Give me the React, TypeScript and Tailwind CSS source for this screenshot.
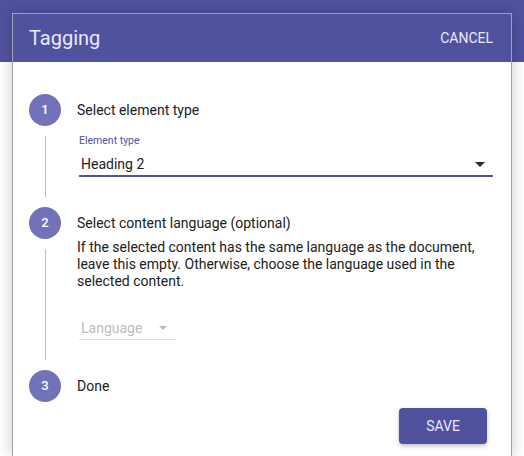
import React from "react";

function Step({
  n,
  label,
  last,
  children,
}: {
  n: number;
  label: string;
  last?: boolean;
  children?: React.ReactNode;
}) {
  return (
    <div className="flex flex-row gap-4">
      <div className="w-8 flex flex-col items-center shrink-0">
        <div className="h-8 w-8 rounded-full bg-[#7172b9] text-white text-[13px] font-medium flex items-center justify-center">
          {n}
        </div>
        {!last && <div className="flex-1 w-px bg-[#bdbdbd] my-[10px]" />}
      </div>
      <div className={"flex-1 min-w-0 " + (last ? "" : "pb-[30px]")}>
        <div className="h-8 flex items-center text-[14px] text-[#212121]">{label}</div>
        {children}
      </div>
    </div>
  );
}

export default function App() {
  return (
    <div className="w-[524px] h-[456px] overflow-hidden bg-[linear-gradient(to_bottom,#5052a0_62px,#ffffff_62px)] pt-[13px] pl-[12px] font-['Roboto',sans-serif]">
      <div className="w-[500px] h-[443px] border border-b-0 border-[#a2a2a8] bg-white shadow-[0_0_14px_rgba(0,0,0,0.22)] flex flex-col">
        <div className="h-[48px] shrink-0 bg-[#5052a0] flex items-center justify-between pl-4 pr-[18px]">
          <span className="text-[20px] text-[#e9e9f6]">Tagging</span>
          <span className="text-[14px] text-[#e9e9f6]">CANCEL</span>
        </div>
        <div className="pt-[32px] pl-4 pr-[18px]">
          <Step n={1} label="Select element type">
            <div className="ml-[2px] mt-[9px]">
              <div className="text-[10.5px] leading-[12px] text-[#5052a0]">Element type</div>
              <div className="mt-[7px] pb-[1px] border-b-2 border-[#5052a0] flex items-center justify-between">
                <span className="pl-[2px] text-[14px] leading-[20px] text-[#212121]">Heading 2</span>
                <svg width="10" height="5" viewBox="0 0 10 5" className="mr-[8px]">
                  <polygon points="0,0 10,0 5,5" fill="#2a2a2a" />
                </svg>
              </div>
            </div>
          </Step>
          <Step n={2} label="Select content language (optional)">
            <p className="text-[14px] leading-[17px] text-[#212121]">
              If the selected content has the same language as the document, leave this empty. Otherwise, choose the
              language used in the selected content.
            </p>
            <div className="ml-[2px] mt-[28px] w-[97px] pb-[1px] border-b border-[#e0e0e0] flex items-center justify-between">
              <span className="pl-[2px] text-[14px] leading-[20px] text-[#bdbdbd]">Language</span>
              <svg width="8" height="4" viewBox="0 0 8 4" className="mr-[9px]">
                <polygon points="0,0 8,0 4,4" fill="#bdbdbd" />
              </svg>
            </div>
          </Step>
          <Step n={3} label="Done" last />
        </div>
        <div className="flex justify-end pr-6 mt-[6px]">
          <button className="w-[88px] h-[36px] rounded-[4px] bg-[#5052a0] text-[#e9e9f6] text-[14px] shadow-[0_2px_4px_rgba(0,0,0,0.25)]">
            SAVE
          </button>
        </div>
      </div>
    </div>
  );
}
